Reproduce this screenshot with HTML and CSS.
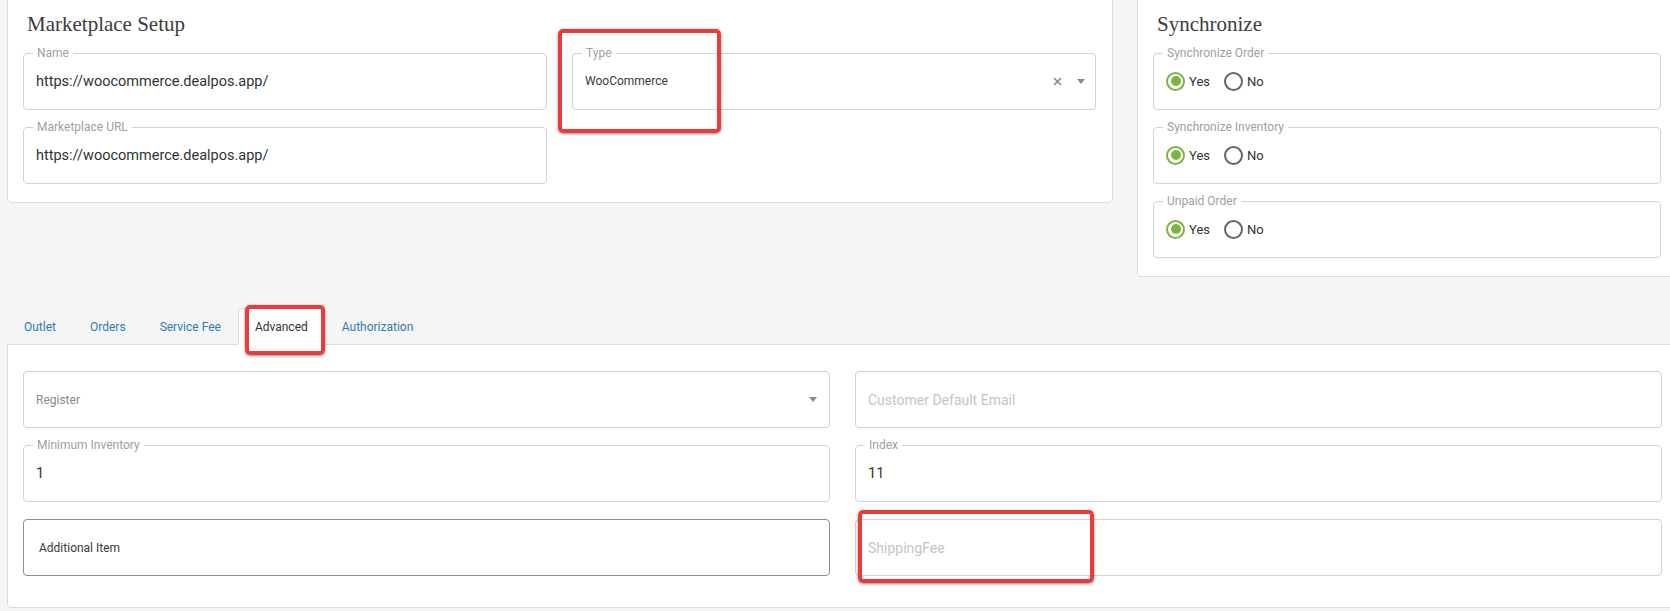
FILE: index.html
```html
<!DOCTYPE html>
<html lang="en">
<head>
    <meta charset="UTF-8">
    <title>Marketplace Setup</title>
    <link rel="stylesheet" href="styles.css">
</head>
<body>
<div class="page">
    <div class="top-row">
        <div class="card setup-card">
            <h2 class="card-title">Marketplace Setup</h2>
            <div class="setup-grid">
                <div class="col">
                    <fieldset class="field">
                        <legend>Name</legend>
                        <div class="row"><span class="value">https://woocommerce.dealpos.app/</span></div>
                    </fieldset>
                    <fieldset class="field">
                        <legend>Marketplace URL</legend>
                        <div class="row"><span class="value">https://woocommerce.dealpos.app/</span></div>
                    </fieldset>
                </div>
                <div class="col">
                    <fieldset class="field select-field">
                        <legend>Type</legend>
                        <div class="row">
                            <span class="value small">WooCommerce</span>
                            <svg class="clear" width="9" height="9" viewBox="0 0 9 9"><path d="M1 1L8 8M8 1L1 8" stroke="#8a8a8a" stroke-width="1.6"/></svg>
                            <span class="caret"></span>
                        </div>
                    </fieldset>
                </div>
            </div>
        </div>
        <div class="card sync-card">
            <h2 class="card-title">Synchronize</h2>
            <div class="col">
                <fieldset class="field">
                    <legend>Synchronize Order</legend>
                    <div class="row">
                        <label class="radio"><span class="dot on"></span>Yes</label>
                        <label class="radio"><span class="dot"></span>No</label>
                    </div>
                </fieldset>
                <fieldset class="field">
                    <legend>Synchronize Inventory</legend>
                    <div class="row">
                        <label class="radio"><span class="dot on"></span>Yes</label>
                        <label class="radio"><span class="dot"></span>No</label>
                    </div>
                </fieldset>
                <fieldset class="field">
                    <legend>Unpaid Order</legend>
                    <div class="row">
                        <label class="radio"><span class="dot on"></span>Yes</label>
                        <label class="radio"><span class="dot"></span>No</label>
                    </div>
                </fieldset>
            </div>
        </div>
    </div>

    <ul class="tabs">
        <li><a>Outlet</a></li>
        <li><a>Orders</a></li>
        <li><a>Service Fee</a></li>
        <li class="active"><a>Advanced</a></li>
        <li><a>Authorization</a></li>
    </ul>
    <div class="tab-panel">
        <div class="panel-grid">
            <div class="field plain select-field">
                <div class="row">
                    <span class="value muted">Register</span>
                    <span class="caret"></span>
                </div>
            </div>
            <div class="field plain">
                <div class="row"><span class="value placeholder">Customer Default Email</span></div>
            </div>
            <fieldset class="field">
                <legend>Minimum Inventory</legend>
                <div class="row"><span class="value">1</span></div>
            </fieldset>
            <fieldset class="field">
                <legend>Index</legend>
                <div class="row"><span class="value">11</span></div>
            </fieldset>
            <div class="field plain dark">
                <div class="row"><span class="value small">Additional Item</span></div>
            </div>
            <div class="field plain">
                <div class="row"><span class="value placeholder">ShippingFee</span></div>
            </div>
        </div>
    </div>
</div>

<div class="mark mark-type"></div>
<div class="mark mark-tab"></div>
<div class="mark mark-shipping"></div>
</body>
</html>
```

FILE: styles.css
```css
body{
    margin: 0;
    background: #f5f5f5;
    font-family: Roboto, "Liberation Sans", sans-serif;
    color: #333;
    overflow: hidden;
}
.page{
    width: 1671px;
    padding-left: 7px;
}
.top-row{
    display: flex;
    align-items: flex-start;
    gap: 24px;
    margin-top: -6px;
}
.card{
    background: #fff;
    border: 1px solid #dcdcdc;
    border-radius: 4px;
    padding: 15px 16px 18px 15px;
    box-sizing: border-box;
}
.setup-card{
    width: 1106px;
}
.sync-card{
    flex: 1;
}
.card-title{
    margin: 0 0 8px 4px;
    font-family: "Liberation Serif", serif;
    font-weight: normal;
    font-size: 21px;
    line-height: 28px;
    color: #3c3c3c;
}
.setup-grid{
    display: grid;
    grid-template-columns: 1fr 1fr;
    gap: 25px;
}
.col{
    display: flex;
    flex-direction: column;
    gap: 10px;
}

/* outlined fields */
.field{
    display: block;
    margin: 0;
    padding: 0 12px 7px;
    border: 1px solid #ccd5df;
    border-radius: 4px;
    height: 64px;
    box-sizing: border-box;
    min-width: 0;
    background: #fff;
}
.field legend{
    font-size: 12px;
    line-height: 14px;
    color: #a0a0a0;
    padding: 0 4px;
    margin-left: -3px;
}
.row{
    display: flex;
    align-items: center;
    height: 42px;
}
.field.plain{
    height: 57px;
    margin-top: 7px;
    padding-bottom: 0;
}
.field.plain .row{
    height: 55px;
}
.field.dark{
    border-color: #8f8f8f;
    padding-left: 15px;
}
.value{
    font-size: 14.5px;
    color: #333;
    flex: 1;
}
.value.small{
    font-size: 12px;
    color: #3a3a3a;
}
.value.muted{
    font-size: 12px;
    color: #8a8a8a;
}
.value.placeholder{
    font-size: 14px;
    color: #c4c4c4;
}
.select-field{
    padding-right: 10px;
}
.panel-grid .select-field{
    padding-right: 12px;
}
.clear{
    margin-right: 15px;
}
.caret{
    width: 0;
    height: 0;
    border-left: 4.5px solid transparent;
    border-right: 4.5px solid transparent;
    border-top: 5px solid #8a8a8a;
}

/* radios */
.radio{
    display: inline-flex;
    align-items: center;
    gap: 4px;
    margin-right: 14px;
    font-size: 13px;
    color: #333;
}
.dot{
    width: 19px;
    height: 19px;
    border: 2px solid #666;
    border-radius: 50%;
    box-sizing: border-box;
    display: flex;
    align-items: center;
    justify-content: center;
}
.dot.on{
    border-color: #7cb342;
}
.dot.on::after{
    content: "";
    width: 10px;
    height: 10px;
    border-radius: 50%;
    background: #7cb342;
}

/* tabs */
.tabs{
    display: flex;
    margin: 31px 0 -1px;
    padding: 0;
    list-style: none;
    position: relative;
}
.tabs a{
    display: block;
    padding: 11px 16px 10px;
    border: 1px solid transparent;
    border-radius: 4px 4px 0 0;
    font-size: 12px;
    line-height: 14px;
    color: #337ab7;
}
.tabs .active a{
    background: #fff;
    border-color: #dcdcdc;
    border-bottom-color: #fff;
    color: #333;
}
.tab-panel{
    background: #fff;
    border: 1px solid #dcdcdc;
    border-radius: 0 0 4px 4px;
    padding: 19px 15px 31px;
}
.panel-grid{
    display: grid;
    grid-template-columns: 1fr 1fr;
    gap: 10px 25px;
}

/* red annotation boxes */
.mark{
    position: absolute;
    box-sizing: border-box;
    border: 4px solid #ea3b3b;
    border-radius: 5px;
    box-shadow: 0 1px 3px rgba(0, 0, 0, 0.45);
}
.mark-type{
    left: 558px;
    top: 29px;
    width: 163px;
    height: 104px;
}
.mark-tab{
    left: 245px;
    top: 305px;
    width: 80px;
    height: 50px;
}
.mark-shipping{
    left: 858px;
    top: 510px;
    width: 236px;
    height: 73px;
}
```
